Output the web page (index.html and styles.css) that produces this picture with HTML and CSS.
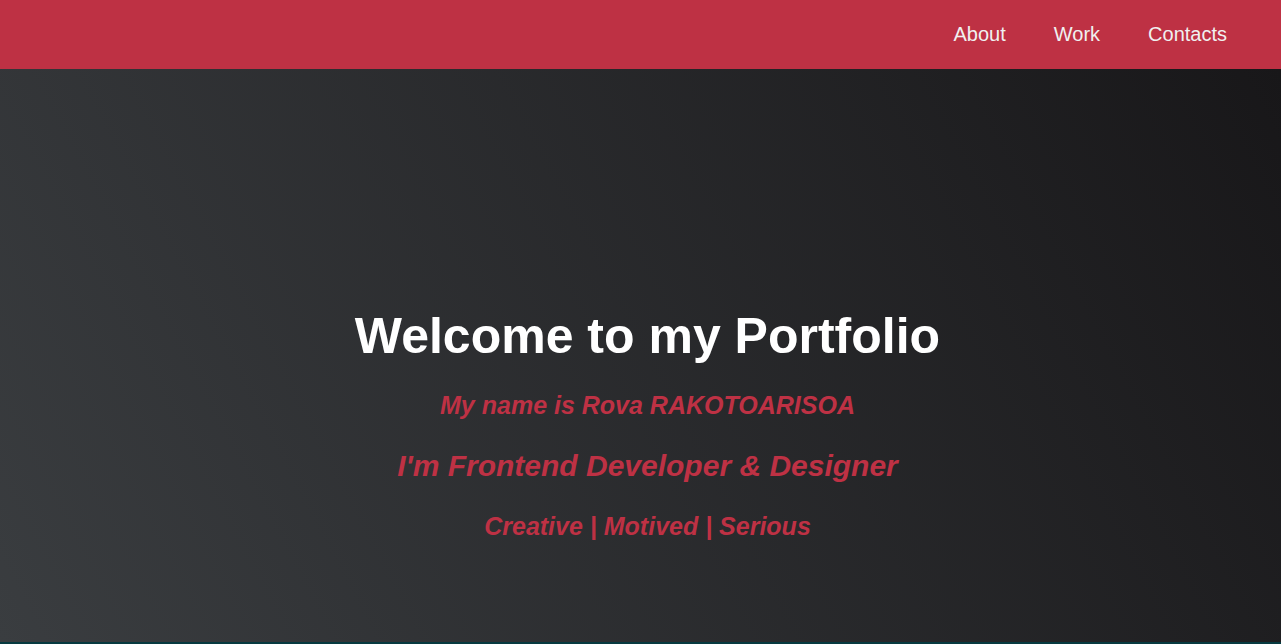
FILE: index.html
```html
<!DOCTYPE html>
<html lang="en">
<head>
<meta charset="utf-8">
<title>Portfolio</title>
<link rel="stylesheet" href="styles.css">
</head>
<body>
<nav class="nav">
  <ul class="nav-list">
    <li><a href="#about">About</a></li>
    <li><a href="#work">Work</a></li>
    <li><a href="#contacts">Contacts</a></li>
  </ul>
</nav>
<section class="hero">
  <h1 class="title">Welcome to my Portfolio</h1>
  <p class="line line-name">My name is Rova RAKOTOARISOA</p>
  <p class="line line-role">I'm Frontend Developer &amp; Designer</p>
  <p class="line line-traits">Creative | Motived | Serious</p>
</section>
<section class="next"></section>
</body>
</html>
```
FILE: styles.css
```css
* { box-sizing: border-box; }
html, body { margin: 0; padding: 0; }
body {
  font-family: "Liberation Sans", Arial, sans-serif;
  background: #303841;
  color: #f0f0f0;
}
.nav {
  height: 69px;
  background: #be3144;
  display: flex;
  justify-content: flex-end;
}
.nav-list {
  list-style: none;
  margin: 0;
  padding: 0 30px 0 0;
  display: flex;
}
.nav-list a {
  display: block;
  padding: 23px 24px;
  font-size: 20px;
  line-height: 23px;
  color: #f0f0f0;
  text-decoration: none;
}
.hero {
  height: 573px;
  padding: 242px 0 0 14px;
  text-align: center;
  background-color: #000;
  background-image: linear-gradient(62deg, #3a3d40 0%, #181719 100%);
}
.title {
  margin: 0;
  font-size: 50px;
  line-height: 1;
  font-weight: 700;
  color: #fff;
}
.line {
  margin: 0;
  line-height: 1;
  font-style: italic;
  font-weight: 700;
  color: #be3144;
}
.line-name { font-size: 25px; margin-top: 32px; }
.line-role { font-size: 30px; margin-top: 33px; }
.line-traits { font-size: 25px; margin-top: 33px; }
.next {
  height: 2px;
  background: #073a40;
}
```
